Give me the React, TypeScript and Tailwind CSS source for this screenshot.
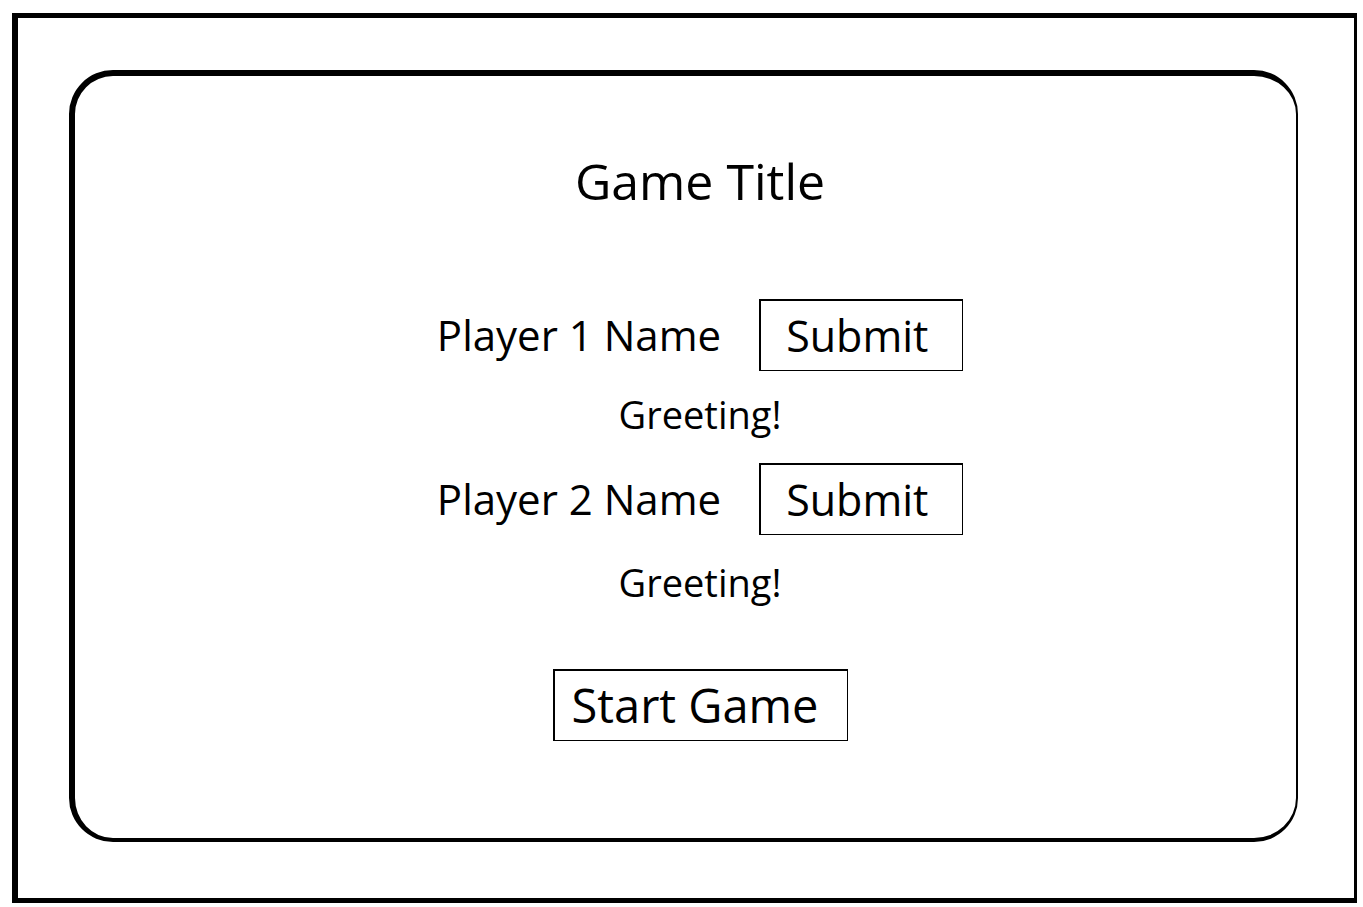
export default function App() {
  const font = { fontFamily: '"Open Sans", "Noto Sans", sans-serif' };
  return (
    <div className="w-[1363px] h-[907px] bg-white flex pl-[12px] pt-[13px] pr-[6px] pb-[4px] text-black" style={font}>
      <div className="flex-1 flex border-l-[6px] border-t-[5px] border-r-[3px] border-b-[5px] border-black">
        <div className="flex-1 flex flex-col items-center ml-[51px] mt-[52px] mr-[56px] mb-[56px] rounded-[44px] border-l-[6px] border-t-[6px] border-r-[2px] border-b-[4px] border-black pl-[29px] pt-[80px]">
          <h1 className="text-[50px] leading-none font-normal">Game Title</h1>

          <div className="mt-[93px] flex items-center gap-[38px]">
            <span className="text-[42px] leading-none">Player 1 Name</span>
            <div className="w-[204px] h-[72px] flex items-center pl-[25px] border-t-2 border-l-2 border-r border-b border-black text-[43px] leading-none">
              Submit
            </div>
          </div>
          <p className="mt-[24px] text-[38px] leading-none">Greeting!</p>

          <div className="mt-[30px] flex items-center gap-[38px]">
            <span className="text-[42px] leading-none">Player 2 Name</span>
            <div className="w-[204px] h-[72px] flex items-center pl-[25px] border-t-2 border-l-2 border-r border-b border-black text-[43px] leading-none">
              Submit
            </div>
          </div>
          <p className="mt-[28px] text-[38px] leading-none">Greeting!</p>

          <div className="mt-[68px] w-[295px] h-[72px] flex items-center pl-[17px] border-t-2 border-l-2 border-r border-b border-black text-[47px] leading-none">
            Start Game
          </div>
        </div>
      </div>
    </div>
  );
}
